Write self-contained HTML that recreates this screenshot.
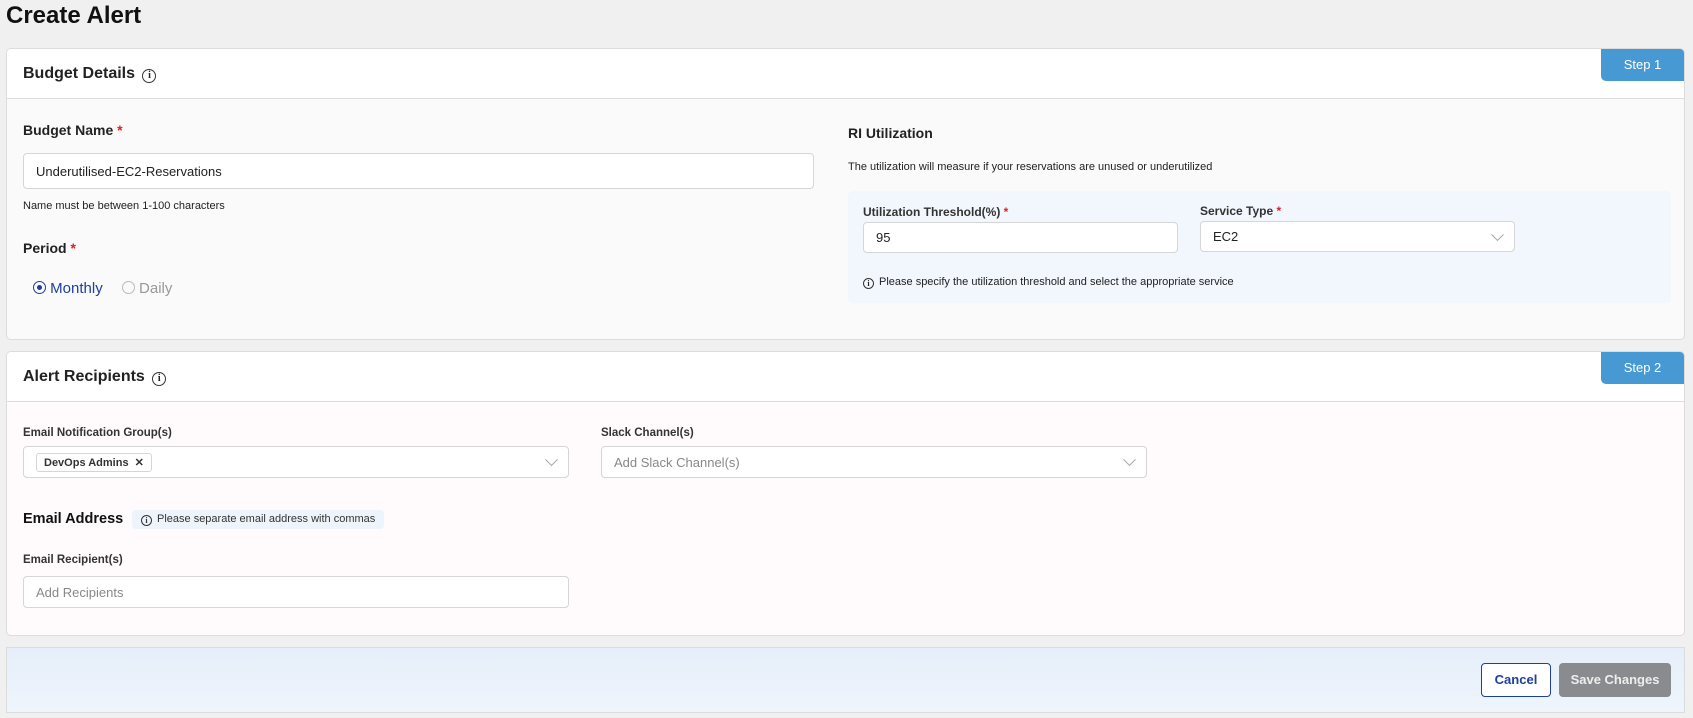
<!DOCTYPE html>
<html><head><meta charset="utf-8"><style>
*{box-sizing:border-box;margin:0;padding:0}
body{width:1693px;height:718px;background:#f0f0f0;font-family:"Liberation Sans",sans-serif;color:#222;position:relative;overflow:hidden}
.abs{position:absolute}
h1{position:absolute;left:6px;top:2px;font-size:24px;font-weight:700;color:#111}
.card{position:absolute;left:6px;width:1679px;border:1px solid #dcdcdc;border-radius:5px;overflow:hidden}
.hdr{position:absolute;left:0;top:0;right:0;height:50px;background:#fff;border-bottom:1px solid #ddd}
.hdr .t{position:absolute;left:16px;top:16px;font-size:16px;font-weight:700;color:#222}
.info{display:inline-block;width:14px;height:14px;border:1.5px solid #333;border-radius:50%;font-size:10px;line-height:11px;text-align:center;font-weight:700;vertical-align:0px;margin-left:3px;font-family:"Liberation Serif",serif}
.step{position:absolute;right:0;top:0;width:83px;height:32px;background:#4799d3;color:#fff;font-size:13px;text-align:center;line-height:32px;border-bottom-left-radius:5px}
.lbl{font-size:14px;font-weight:700;color:#222}
.req{color:#e02020}
.inp{position:absolute;background:#fff;border:1px solid #d6d6d6;border-radius:4px;font-size:13px;padding-left:12px;display:flex;align-items:center;color:#222}
.ph{color:#888}
.chev{position:absolute;right:12px;top:50%;width:9px;height:9px;border-right:1.2px solid #aaa;border-bottom:1.2px solid #aaa;transform:translateY(-75%) rotate(45deg)}
.sm{font-size:11px;color:#222}
.si{display:inline-block;width:11px;height:11px;border:1.2px solid #333;border-radius:50%;font-size:8px;line-height:9px;text-align:center;font-weight:700;vertical-align:-1px;margin-right:5px;font-family:"Liberation Serif",serif}
</style></head><body>
<h1>Create Alert</h1>

<div class="card" style="top:48px;height:292px;background:#fafafa">
 <div class="hdr"><div class="t">Budget Details <span class="info">i</span></div><div class="step">Step 1</div></div>
 <div class="abs lbl" style="left:16px;top:73px">Budget Name <span class="req">*</span></div>
 <div class="inp" style="left:16px;top:104px;width:791px;height:36px">Underutilised-EC2-Reservations</div>
 <div class="abs sm" style="left:16px;top:151px">Name must be between 1-100 characters</div>
 <div class="abs lbl" style="left:16px;top:191px">Period <span class="req">*</span></div>
 <div class="abs" style="left:26px;top:231px;font-size:15px;color:#1d3f9e">
  <span style="display:inline-block;width:13px;height:13px;border:1.5px solid #1d3f9e;border-radius:50%;vertical-align:-1px;position:relative"><span style="position:absolute;left:2.5px;top:2.5px;width:5px;height:5px;background:#1d3f9e;border-radius:50%"></span></span> Monthly
  <span style="color:#999;margin-left:15px"><span style="display:inline-block;width:13px;height:13px;border:1px solid #bbb;border-radius:50%;vertical-align:-1px"></span> Daily</span>
 </div>
 <div class="abs lbl" style="left:841px;top:76px">RI Utilization</div>
 <div class="abs sm" style="left:841px;top:112px">The utilization will measure if your reservations are unused or underutilized</div>
 <div class="abs" style="left:841px;top:142px;width:823px;height:112px;background:#f2f6fd;border-radius:5px">
  <div class="abs" style="left:15px;top:14px;font-size:12px;font-weight:700;color:#333">Utilization Threshold(%) <span class="req">*</span></div>
  <div class="inp" style="left:15px;top:31px;width:315px;height:31px">95</div>
  <div class="abs" style="left:352px;top:13px;font-size:12px;font-weight:700;color:#333">Service Type <span class="req">*</span></div>
  <div class="inp" style="left:352px;top:30px;width:315px;height:31px">EC2<span class="chev"></span></div>
  <div class="abs sm" style="left:15px;top:85px"><span class="si">i</span>Please specify the utilization threshold and select the appropriate service</div>
 </div>
</div>

<div class="card" style="top:351px;height:285px;background:#fffbfc">
 <div class="hdr"><div class="t">Alert Recipients <span class="info">i</span></div><div class="step">Step 2</div></div>
 <div class="abs" style="left:16px;top:75px;font-size:11.5px;font-weight:700;color:#333">Email Notification Group(s)</div>
 <div class="inp" style="left:16px;top:94px;width:546px;height:32px;padding-left:12px"><span style="border:1px solid #d6d6d6;border-radius:3px;padding:2px 7px;font-size:11px;font-weight:700;color:#333">DevOps Admins &nbsp;✕</span><span class="chev"></span></div>
 <div class="abs" style="left:594px;top:75px;font-size:11.5px;font-weight:700;color:#333">Slack Channel(s)</div>
 <div class="inp ph" style="left:594px;top:94px;width:546px;height:32px">Add Slack Channel(s)<span class="chev"></span></div>
 <div class="abs" style="left:16px;top:159px;font-size:14.5px;font-weight:700;color:#111">Email Address</div>
 <div class="abs sm" style="left:125px;top:158px;background:#eef4fc;border-radius:4px;padding:3px 9px;color:#333"><span class="si">i</span>Please separate email address with commas</div>
 <div class="abs" style="left:16px;top:202px;font-size:11.5px;font-weight:700;color:#333">Email Recipient(s)</div>
 <div class="inp ph" style="left:16px;top:224px;width:546px;height:32px">Add Recipients</div>
</div>

<div class="abs" style="left:6px;top:647px;width:1679px;height:66px;border:1px solid #dcdcdc;background:linear-gradient(#e6eef9,#eef5fd)">
 <div class="abs" style="left:1474px;top:15px;width:70px;height:34px;border:1.5px solid #1d3f9e;border-radius:4px;background:#fff;color:#1d3f9e;font-size:13px;font-weight:700;text-align:center;line-height:31px">Cancel</div>
 <div class="abs" style="left:1552px;top:15px;width:112px;height:34px;border-radius:4px;background:#8a8b8e;color:#eee;font-size:13px;font-weight:700;text-align:center;line-height:34px">Save Changes</div>
</div>
</body></html>
